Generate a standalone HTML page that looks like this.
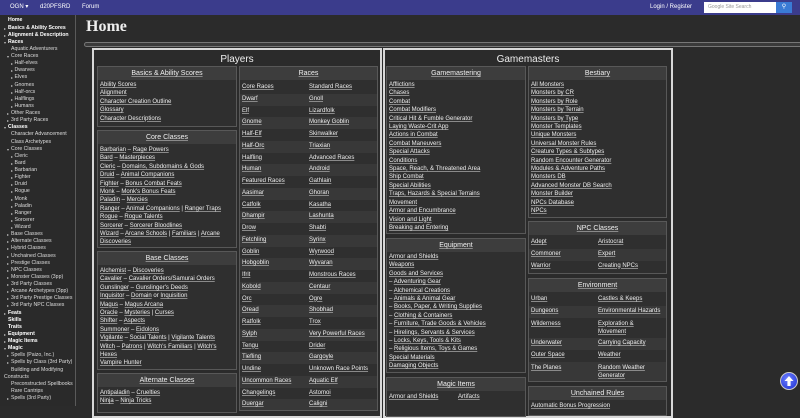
<!DOCTYPE html>
<html><head><meta charset="utf-8"><style>
*{margin:0;padding:0;box-sizing:border-box}
body{width:800px;height:406px;overflow:hidden;background:#2b2b2b;font-family:"Liberation Sans",sans-serif;color:#eee;position:relative}
a{color:#eee;text-decoration:underline;text-decoration-color:#8a8a8a;text-underline-offset:1px}
.nav{position:absolute;left:0;top:0;width:800px;height:15px;background:#3b3c8c;font-size:6px;color:#fff}
.nav span{position:absolute;top:0;line-height:14px}
.side{position:absolute;left:0;top:15px;width:76px;height:391px;border-right:1px solid #5a5a5a;background:#2a2a2a}
.sl{position:absolute;left:0;top:2.4px;font-size:5.2px;line-height:7.13px;white-space:nowrap;width:75px;color:#ddd}
.sl div{position:relative}
.sl b{font-weight:bold;color:#fff}
.t{font-size:4px;color:#bbb;position:absolute;top:0}
.sec{position:absolute;border:2px solid #d8d8d8;background:#2b2b2b}
.sec h2{font-weight:normal;font-size:10px;text-align:center;line-height:18px;color:#eee}
.box{position:absolute;border:1px solid #585858;background:#2f2f2f;overflow:hidden}
.hd{height:13px;background:#3d3d3d;text-align:center;font-size:7px;line-height:13px}
.ls{padding:1px 2px 0 2px;line-height:8.4px;font-size:6px;white-space:nowrap}
.tb{padding-top:2px;font-size:6px}
.tb div{height:11.75px;line-height:11.75px;position:relative;padding-left:2px}
.tb div:nth-child(even){background:#383838}
.tb div span{position:absolute;top:0}
</style></head><body>
<div class="nav">
<span style="left:10px">OGN ▾</span><span style="left:40px">d20PFSRD</span><span style="left:82px">Forum</span>
<span style="left:650px">Login / Register</span>
<div style="position:absolute;left:704px;top:2px;width:72px;height:11px;background:#fff;color:#999;font-size:5px;line-height:11px;padding-left:4px">Google Site Search</div>
<div style="position:absolute;left:776px;top:2px;width:16px;height:11px;background:#3a7bd5;color:#fff;font-size:6px;line-height:11px;text-align:center">&#9906;</div>
</div>
<div class="side"><div class="sl">
<div style="padding-left:8px"><b>Home</b></div>
<div style="padding-left:8px"><span class="t" style="left:4px">▸</span><b>Basics &amp; Ability Scores</b></div>
<div style="padding-left:8px"><span class="t" style="left:4px">▸</span><b>Alignment &amp; Description</b></div>
<div style="padding-left:8px"><span class="t" style="left:4px">▾</span><b>Races</b></div>
<div style="padding-left:11px">Aquatic Adventurers</div>
<div style="padding-left:11px"><span class="t" style="left:7px">▾</span>Core Races</div>
<div style="padding-left:14.5px"><span class="t" style="left:11px">▸</span>Half-elves</div>
<div style="padding-left:14.5px"><span class="t" style="left:11px">▸</span>Dwarves</div>
<div style="padding-left:14.5px"><span class="t" style="left:11px">▸</span>Elves</div>
<div style="padding-left:14.5px"><span class="t" style="left:11px">▸</span>Gnomes</div>
<div style="padding-left:14.5px"><span class="t" style="left:11px">▸</span>Half-orcs</div>
<div style="padding-left:14.5px"><span class="t" style="left:11px">▸</span>Halflings</div>
<div style="padding-left:14.5px"><span class="t" style="left:11px">▸</span>Humans</div>
<div style="padding-left:11px"><span class="t" style="left:7px">▸</span>Other Races</div>
<div style="padding-left:11px"><span class="t" style="left:7px">▸</span>3rd Party Races</div>
<div style="padding-left:8px"><span class="t" style="left:4px">▾</span><b>Classes</b></div>
<div style="padding-left:11px">Character Advancement</div>
<div style="padding-left:11px">Class Archetypes</div>
<div style="padding-left:11px"><span class="t" style="left:7px">▾</span>Core Classes</div>
<div style="padding-left:14.5px"><span class="t" style="left:11px">▸</span>Cleric</div>
<div style="padding-left:14.5px"><span class="t" style="left:11px">▸</span>Bard</div>
<div style="padding-left:14.5px"><span class="t" style="left:11px">▸</span>Barbarian</div>
<div style="padding-left:14.5px"><span class="t" style="left:11px">▸</span>Fighter</div>
<div style="padding-left:14.5px"><span class="t" style="left:11px">▸</span>Druid</div>
<div style="padding-left:14.5px"><span class="t" style="left:11px">▸</span>Rogue</div>
<div style="padding-left:14.5px"><span class="t" style="left:11px">▸</span>Monk</div>
<div style="padding-left:14.5px"><span class="t" style="left:11px">▸</span>Paladin</div>
<div style="padding-left:14.5px"><span class="t" style="left:11px">▸</span>Ranger</div>
<div style="padding-left:14.5px"><span class="t" style="left:11px">▸</span>Sorcerer</div>
<div style="padding-left:14.5px"><span class="t" style="left:11px">▸</span>Wizard</div>
<div style="padding-left:11px"><span class="t" style="left:7px">▸</span>Base Classes</div>
<div style="padding-left:11px"><span class="t" style="left:7px">▸</span>Alternate Classes</div>
<div style="padding-left:11px"><span class="t" style="left:7px">▸</span>Hybrid Classes</div>
<div style="padding-left:11px"><span class="t" style="left:7px">▸</span>Unchained Classes</div>
<div style="padding-left:11px"><span class="t" style="left:7px">▸</span>Prestige Classes</div>
<div style="padding-left:11px"><span class="t" style="left:7px">▸</span>NPC Classes</div>
<div style="padding-left:11px"><span class="t" style="left:7px">▸</span>Monster Classes (3pp)</div>
<div style="padding-left:11px"><span class="t" style="left:7px">▸</span>3rd Party Classes</div>
<div style="padding-left:11px"><span class="t" style="left:7px">▸</span>Arcane Archetypes (3pp)</div>
<div style="padding-left:11px"><span class="t" style="left:7px">▸</span>3rd Party Prestige Classes</div>
<div style="padding-left:11px"><span class="t" style="left:7px">▸</span>3rd Party NPC Classes</div>
<div style="padding-left:8px"><span class="t" style="left:4px">▸</span><b>Feats</b></div>
<div style="padding-left:8px"><b>Skills</b></div>
<div style="padding-left:8px"><b>Traits</b></div>
<div style="padding-left:8px"><span class="t" style="left:4px">▸</span><b>Equipment</b></div>
<div style="padding-left:8px"><span class="t" style="left:4px">▸</span><b>Magic Items</b></div>
<div style="padding-left:8px"><span class="t" style="left:4px">▾</span><b>Magic</b></div>
<div style="padding-left:11px"><span class="t" style="left:7px">▸</span>Spells (Paizo, Inc.)</div>
<div style="padding-left:11px"><span class="t" style="left:7px">▸</span>Spells by Class (3rd Party)</div>
<div style="padding-left:11px">Building and Modifying</div>
<div style="padding-left:4px">Constructs</div>
<div style="padding-left:11px">Preconstructed Spellbooks</div>
<div style="padding-left:11px">Rare Cantrips</div>
<div style="padding-left:11px"><span class="t" style="left:7px">▸</span>Spells (3rd Party)</div>
</div></div>

<div style="position:absolute;left:86px;top:17px;font-family:'Liberation Serif',serif;font-weight:bold;font-size:16px;line-height:20px;color:#eee">Home</div>
<div style="position:absolute;left:84px;top:42px;width:720px;height:5px;border:1px solid #777;border-radius:3px;background:#3a3a3a"></div>

<div class="sec" style="left:92px;top:48px;width:290px;height:370px"><h2 style="margin-top:1px">Players</h2></div>
<div class="sec" style="left:383px;top:48px;width:290px;height:370px"><h2 style="margin-top:1px">Gamemasters</h2></div>

<div class="box" style="left:97px;top:66px;width:140px;height:61px"><div class="hd"><a>Basics &amp; Ability Scores</a></div><div class="ls">
<a>Ability Scores</a><br><a>Alignment</a><br><a>Character Creation Outline</a><br><a>Glossary</a><br><a>Character Descriptions</a></div></div>

<div class="box" style="left:97px;top:130px;width:140px;height:118px"><div class="hd"><a>Core Classes</a></div><div class="ls" style="padding-top:2px">
<a>Barbarian</a> – <a>Rage Powers</a><br><a>Bard</a> – <a>Masterpieces</a><br><a>Cleric</a> – <a>Domains, Subdomains &amp; Gods</a><br><a>Druid</a> – <a>Animal Companions</a><br><a>Fighter</a> – <a>Bonus Combat Feats</a><br><a>Monk</a> – <a>Monk's Bonus Feats</a><br><a>Paladin</a> – <a>Mercies</a><br><a>Ranger</a> – <a>Animal Companions</a> | <a>Ranger Traps</a><br><a>Rogue</a> – <a>Rogue Talents</a><br><a>Sorcerer</a> – <a>Sorcerer Bloodlines</a><br><a>Wizard</a> – <a>Arcane Schools</a> | <a>Familiars</a> | <a>Arcane</a><br><a>Discoveries</a></div></div>

<div class="box" style="left:97px;top:251px;width:140px;height:119px"><div class="hd"><a>Base Classes</a></div><div class="ls" style="padding-top:2px">
<a>Alchemist</a> – <a>Discoveries</a><br><a>Cavalier</a> – <a>Cavalier Orders/Samurai Orders</a><br><a>Gunslinger</a> – <a>Gunslinger's Deeds</a><br><a>Inquisitor</a> – <a>Domain</a> or <a>Inquisition</a><br><a>Magus</a> – <a>Magus Arcana</a><br><a>Oracle</a> – <a>Mysteries</a> | <a>Curses</a><br><a>Shifter</a> – <a>Aspects</a><br><a>Summoner</a> – <a>Eidolons</a><br><a>Vigilante</a> – <a>Social Talents</a> | <a>Vigilante Talents</a><br><a>Witch</a> – <a>Patrons</a> | <a>Witch's Familiars</a> | <a>Witch's</a><br><a>Hexes</a><br><a>Vampire Hunter</a></div></div>

<div class="box" style="left:97px;top:373px;width:140px;height:40px"><div class="hd"><a>Alternate Classes</a></div><div class="ls" style="padding-top:2px">
<a>Antipaladin</a> – <a>Cruelties</a><br><a>Ninja</a> – <a>Ninja Tricks</a></div></div>

<div class="box" style="left:239px;top:66px;width:139px;height:345px"><div class="hd"><a>Races</a></div><div class="tb">
<div><a>Core Races</a><span style="left:69px"><a>Standard Races</a></span></div>
<div><a>Dwarf</a><span style="left:69px"><a>Gnoll</a></span></div>
<div><a>Elf</a><span style="left:69px"><a>Lizardfolk</a></span></div>
<div><a>Gnome</a><span style="left:69px"><a>Monkey Goblin</a></span></div>
<div><a>Half-Elf</a><span style="left:69px"><a>Skinwalker</a></span></div>
<div><a>Half-Orc</a><span style="left:69px"><a>Triaxian</a></span></div>
<div><a>Halfling</a><span style="left:69px"><a>Advanced Races</a></span></div>
<div><a>Human</a><span style="left:69px"><a>Android</a></span></div>
<div><a>Featured Races</a><span style="left:69px"><a>Gathlain</a></span></div>
<div><a>Aasimar</a><span style="left:69px"><a>Ghoran</a></span></div>
<div><a>Catfolk</a><span style="left:69px"><a>Kasatha</a></span></div>
<div><a>Dhampir</a><span style="left:69px"><a>Lashunta</a></span></div>
<div><a>Drow</a><span style="left:69px"><a>Shabti</a></span></div>
<div><a>Fetchling</a><span style="left:69px"><a>Syrinx</a></span></div>
<div><a>Goblin</a><span style="left:69px"><a>Wyrwood</a></span></div>
<div><a>Hobgoblin</a><span style="left:69px"><a>Wyvaran</a></span></div>
<div><a>Ifrit</a><span style="left:69px"><a>Monstrous Races</a></span></div>
<div><a>Kobold</a><span style="left:69px"><a>Centaur</a></span></div>
<div><a>Orc</a><span style="left:69px"><a>Ogre</a></span></div>
<div><a>Oread</a><span style="left:69px"><a>Shobhad</a></span></div>
<div><a>Ratfolk</a><span style="left:69px"><a>Trox</a></span></div>
<div><a>Sylph</a><span style="left:69px"><a>Very Powerful Races</a></span></div>
<div><a>Tengu</a><span style="left:69px"><a>Drider</a></span></div>
<div><a>Tiefling</a><span style="left:69px"><a>Gargoyle</a></span></div>
<div><a>Undine</a><span style="left:69px"><a>Unknown Race Points</a></span></div>
<div><a>Uncommon Races</a><span style="left:69px"><a>Aquatic Elf</a></span></div>
<div><a>Changelings</a><span style="left:69px"><a>Astomoi</a></span></div>
<div><a>Duergar</a><span style="left:69px"><a>Caligni</a></span></div>
</div></div>

<div class="box" style="left:386px;top:66px;width:140px;height:168px"><div class="hd"><a>Gamemastering</a></div><div class="ls">
<a>Afflictions</a><br><a>Chases</a><br><a>Combat</a><br><a>Combat Modifiers</a><br><a>Critical Hit &amp; Fumble Generator</a><br><a>Laying Waste-Crit App</a><br><a>Actions in Combat</a><br><a>Combat Maneuvers</a><br><a>Special Attacks</a><br><a>Conditions</a><br><a>Space, Reach, &amp; Threatened Area</a><br><a>Ship Combat</a><br><a>Special Abilities</a><br><a>Traps, Hazards &amp; Special Terrains</a><br><a>Movement</a><br><a>Armor and Encumbrance</a><br><a>Vision and Light</a><br><a>Breaking and Entering</a></div></div>

<div class="box" style="left:386px;top:238px;width:140px;height:135px"><div class="hd"><a>Equipment</a></div><div class="ls">
<a>Armor and Shields</a><br><a>Weapons</a><br><a>Goods and Services</a><br>– <a>Adventuring Gear</a><br>– <a>Alchemical Creations</a><br>– <a>Animals &amp; Animal Gear</a><br>– <a>Books, Paper, &amp; Writing Supplies</a><br>– <a>Clothing &amp; Containers</a><br>– <a>Furniture, Trade Goods &amp; Vehicles</a><br>– <a>Hirelings, Servants &amp; Services</a><br>– <a>Locks, Keys, Tools &amp; Kits</a><br>– <a>Religious Items, Toys &amp; Games</a><br><a>Special Materials</a><br><a>Damaging Objects</a></div></div>

<div class="box" style="left:386px;top:377px;width:140px;height:40px"><div class="hd"><a>Magic Items</a></div><div class="tb" style="padding-top:1px">
<div style="background:none"><a>Armor and Shields</a><span style="left:71px"><a>Artifacts</a></span></div></div></div>

<div class="box" style="left:528px;top:66px;width:139px;height:152px"><div class="hd"><a>Bestiary</a></div><div class="ls">
<a>All Monsters</a><br><a>Monsters by CR</a><br><a>Monsters by Role</a><br><a>Monsters by Terrain</a><br><a>Monsters by Type</a><br><a>Monster Templates</a><br><a>Unique Monsters</a><br><a>Universal Monster Rules</a><br><a>Creature Types &amp; Subtypes</a><br><a>Random Encounter Generator</a><br><a>Modules &amp; Adventure Paths</a><br><a>Monsters DB</a><br><a>Advanced Monster DB Search</a><br><a>Monster Builder</a><br><a>NPCs Database</a><br><a>NPCs</a></div></div>

<div class="box" style="left:528px;top:221px;width:139px;height:53px"><div class="hd"><a>NPC Classes</a></div><div class="tb" style="padding-top:2px">
<div><a>Adept</a><span style="left:69px"><a>Aristocrat</a></span></div>
<div><a>Commoner</a><span style="left:69px"><a>Expert</a></span></div>
<div><a>Warrior</a><span style="left:69px"><a>Creating NPCs</a></span></div>
</div></div>

<div class="box" style="left:528px;top:278px;width:139px;height:104px"><div class="hd"><a>Environment</a></div><div class="tb" style="padding-top:2px">
<div><a>Urban</a><span style="left:69px"><a>Castles &amp; Keeps</a></span></div>
<div><a>Dungeons</a><span style="left:69px"><a>Environmental Hazards</a></span></div>
<div style="height:20.5px;line-height:8.5px;padding-top:2px"><a>Wilderness</a><span style="left:69px;top:2px"><a>Exploration &amp;</a><br><a>Movement</a></span></div>
<div><a>Underwater</a><span style="left:69px"><a>Carrying Capacity</a></span></div>
<div style="background:none"><a>Outer Space</a><span style="left:69px"><a>Weather</a></span></div>
<div style="background:#383838;height:20.5px;line-height:8.5px;padding-top:2px"><a>The Planes</a><span style="left:69px;top:2px"><a>Random Weather</a><br><a>Generator</a></span></div>
</div></div>

<div class="box" style="left:528px;top:386px;width:139px;height:30px"><div class="hd"><a>Unchained Rules</a></div><div class="ls" style="padding-top:2px"><a>Automatic Bonus Progression</a></div></div>

<div style="position:absolute;left:780px;top:372px;width:18px;height:18px;border-radius:50%;background:radial-gradient(circle at 40% 35%,#6a7cff,#1c2fd0);border:1px solid #ccc">
<svg width="16" height="16" viewBox="0 0 16 16" style="position:absolute;left:0;top:0"><path d="M8 3 L12.5 8 L9.6 8 L9.6 13 L6.4 13 L6.4 8 L3.5 8 Z" fill="#fff"/></svg></div>
</body></html>
